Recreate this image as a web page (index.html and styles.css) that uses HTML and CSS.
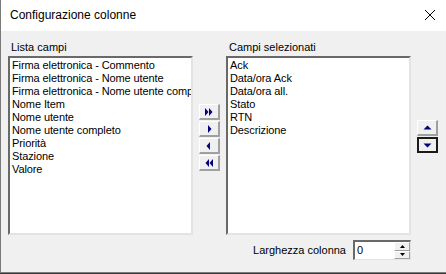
FILE: index.html
```html
<!DOCTYPE html>
<html lang="it">
<head>
    <meta charset="UTF-8">
    <title>Configurazione colonne</title>
    <link rel="stylesheet" href="styles.css">
</head>
<body>
    <div class="window">
        <div class="titlebar">
            <span class="title">Configurazione colonne</span>
            <svg class="close" width="12" height="12" viewBox="0 0 12 12">
                <path d="M1 1 L11 11 M11 1 L1 11" stroke="#000" stroke-width="1"/>
            </svg>
        </div>

        <div class="client">
            <div class="lists">
                <div class="col">
                    <div class="label">Lista campi</div>
                    <ul class="listbox">
                        <li>Firma elettronica - Commento</li>
                        <li>Firma elettronica - Nome utente</li>
                        <li>Firma elettronica - Nome utente completo</li>
                        <li>Nome Item</li>
                        <li>Nome utente</li>
                        <li>Nome utente completo</li>
                        <li>Priorità</li>
                        <li>Stazione</li>
                        <li>Valore</li>
                    </ul>
                </div>

                <!-- pulsanti di spostamento -->
                <div class="movebtns">
                    <button class="btn">
                        <svg width="10" height="8" viewBox="0 0 10 8"><path d="M1 0 L4.5 4 L1 8Z M5 0 L8.5 4 L5 8Z" fill="#000080"/></svg>
                    </button>
                    <button class="btn">
                        <svg width="10" height="8" viewBox="0 0 10 8"><path d="M4 0 L7.5 4 L4 8Z" fill="#000080"/></svg>
                    </button>
                    <button class="btn">
                        <svg width="10" height="8" viewBox="0 0 10 8"><path d="M6 0 L2.5 4 L6 8Z" fill="#000080"/></svg>
                    </button>
                    <button class="btn">
                        <svg width="10" height="8" viewBox="0 0 10 8"><path d="M5 0 L1.5 4 L5 8Z M9 0 L5.5 4 L9 8Z" fill="#000080"/></svg>
                    </button>
                </div>

                <div class="col">
                    <div class="label">Campi selezionati</div>
                    <ul class="listbox">
                        <li>Ack</li>
                        <li>Data/ora Ack</li>
                        <li>Data/ora all.</li>
                        <li>Stato</li>
                        <li>RTN</li>
                        <li>Descrizione</li>
                    </ul>
                </div>

                <div class="orderbtns">
                    <button class="btn">
                        <svg width="9" height="5" viewBox="0 0 9 5"><path d="M0.5 4.5 L4.5 0.5 L8.5 4.5Z" fill="#000080"/></svg>
                    </button>
                    <button class="btn default">
                        <svg width="9" height="5" viewBox="0 0 9 5"><path d="M0.5 0.5 L4.5 4.5 L8.5 0.5Z" fill="#000080"/></svg>
                    </button>
                </div>
            </div>

            <div class="widthrow">
                <span class="label">Larghezza colonna</span>
                <div class="spin">
                    <span class="spinval">0</span>
                    <div class="spinbtns">
                        <span class="spinbtn"><svg width="5" height="3" viewBox="0 0 5 3"><path d="M0 3 L2.5 0 L5 3Z" fill="#000"/></svg></span>
                        <span class="spinbtn"><svg width="5" height="3" viewBox="0 0 5 3"><path d="M0 0 L2.5 3 L5 0Z" fill="#000"/></svg></span>
                    </div>
                </div>
            </div>
        </div>
    </div>
</body>
</html>
```

FILE: styles.css
```css
body {
    margin: 0;
    font-family: "Liberation Sans", Arial, sans-serif;
    background: #3a3a3a;
}
.window {
    width: 446px;
    height: 273px;
    box-sizing: border-box;
    border-left: 1px solid #7a7a7a;
    border-bottom: 1px solid #7a7a7a;
    background-color: #f0f0f0;
    display: flex;
    flex-direction: column;
}
.titlebar {
    height: 31px;
    background-color: #ffffff;
    display: flex;
    align-items: center;
    justify-content: space-between;
    padding: 0 10px 0 9px;
    flex-shrink: 0;
}
.title {
    font-size: 12px;
    color: #000;
    margin-top: -1px;
}
.close {
    margin-top: -1px;
}
.client {
    padding: 10px 0 0 7px;
}
.lists {
    display: flex;
    align-items: flex-start;
}
.col {
    display: flex;
    flex-direction: column;
}
.label {
    font-size: 11px;
    color: #000;
    height: 15px;
    padding-left: 3px;
}
.listbox {
    list-style: none;
    margin: 0;
    padding: 1px 0 0 2px;
    width: 185px;
    height: 179px;
    box-sizing: border-box;
    background-color: #fff;
    border-top: 2px solid #696969;
    border-left: 2px solid #696969;
    border-bottom: 2px solid #e3e3e3;
    border-right: 2px solid #e3e3e3;
    overflow: hidden;
    font-size: 11px;
    line-height: 13px;
    letter-spacing: -0.1px;
    white-space: nowrap;
}
.movebtns {
    display: flex;
    flex-direction: column;
    gap: 1px;
    margin: 63px 6px 0 6px;
}
.orderbtns {
    display: flex;
    flex-direction: column;
    gap: 1px;
    margin: 79px 0 0 6px;
}
.btn {
    width: 21px;
    height: 16px;
    padding: 0;
    box-sizing: border-box;
    background-color: #f0f0f0;
    border-top: 1px solid #ffffff;
    border-left: 1px solid #ffffff;
    border-bottom: 2px solid #a0a0a0;
    border-right: 2px solid #a0a0a0;
    display: flex;
    align-items: center;
    justify-content: center;
}
.btn.default {
    border: 2px solid #1a1a1a;
}
.widthrow {
    display: flex;
    justify-content: flex-end;
    align-items: center;
    padding-right: 35px;
    margin-top: 5px;
}
.widthrow .label {
    padding: 0;
    height: auto;
    margin-right: 7px;
}
.spin {
    width: 58px;
    height: 20px;
    box-sizing: border-box;
    background-color: #fff;
    border-top: 2px solid #696969;
    border-left: 2px solid #696969;
    border-bottom: 1px solid #e3e3e3;
    border-right: 1px solid #e3e3e3;
    display: flex;
    justify-content: space-between;
}
.spinval {
    font-size: 11px;
    line-height: 16px;
    padding-left: 2px;
}
.spinbtns {
    display: flex;
    flex-direction: column;
    width: 16px;
}
.spinbtn {
    flex: 1;
    background-color: #f0f0f0;
    border-top: 1px solid #fff;
    border-left: 1px solid #fff;
    border-bottom: 1px solid #a0a0a0;
    border-right: 1px solid #a0a0a0;
    display: flex;
    align-items: center;
    justify-content: center;
}
```
